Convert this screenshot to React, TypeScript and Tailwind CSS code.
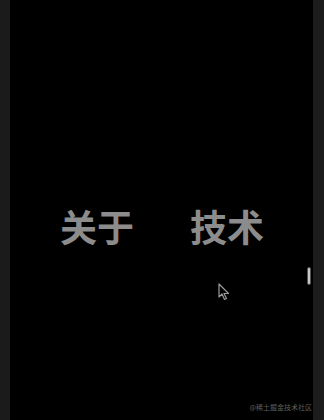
import React from "react";

const cjk = { fontFamily: '"Noto Sans CJK SC", "Noto Sans", sans-serif' };

function Cursor() {
  return (
    <svg width="12" height="18" viewBox="0 0 12 18" className="absolute left-[218px] top-[283px]">
      <path d="M1 1 L1 14 L4 11 L6.5 16.5 L8.5 15.5 L6 10.5 L10.5 10.5 Z" fill="#000" stroke="#9a9a9a" strokeWidth="1.2" strokeLinejoin="round" />
    </svg>
  );
}

export default function App() {
  return (
    <div className="relative flex h-[420px] w-[324px] overflow-hidden bg-black" style={cjk}>
      <div className="w-[10px] bg-[#1b1b1b]" />
      <main className="flex flex-1 flex-col">
        <div className="flex pt-[208px] pl-[50px]">
          <span className="text-[37px] font-semibold leading-none text-[#8c8c8c]">关于</span>
          <span className="ml-[56px] text-[37px] font-semibold leading-none text-[#8c8c8c]">技术</span>
        </div>
        <div className="mt-auto flex justify-end pb-[9px] pr-[1px]">
          <span className="text-[7px] leading-none text-[#5e5e5e]">@稀土掘金技术社区</span>
        </div>
      </main>
      <div className="relative w-[11px] bg-[#1c1c1c]">
        <div className="absolute -left-[6px] top-[267px] h-[18px] w-[4px] rounded-sm border border-[#555] bg-[#c8c8c8]" />
      </div>
      <Cursor />
    </div>
  );
}
